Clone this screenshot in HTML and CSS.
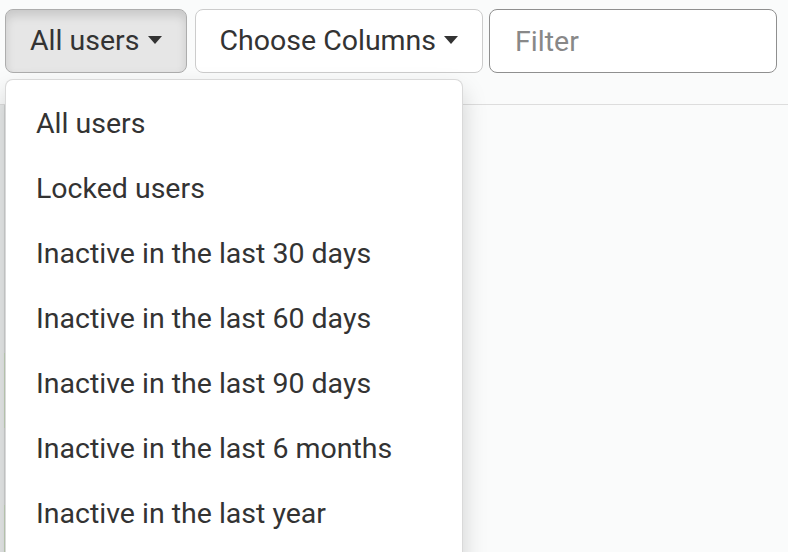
FILE: index.html
```html
<!DOCTYPE html>
<html lang="en">
<head>
    <meta charset="UTF-8">
    <meta name="viewport" content="width=device-width, initial-scale=1.0">
    <title>Users</title>
    <link rel="stylesheet" href="styles.css">
</head>
<body>
    <!-- Toolbar -->
    <div class="toolbar">
        <div class="btn-group">
            <button class="btn active">All users <span class="caret"></span></button>
            <ul class="dropdown-menu">
                <li><a href="#">All users</a></li>
                <li><a href="#">Locked users</a></li>
                <li><a href="#">Inactive in the last 30 days</a></li>
                <li><a href="#">Inactive in the last 60 days</a></li>
                <li><a href="#">Inactive in the last 90 days</a></li>
                <li><a href="#">Inactive in the last 6 months</a></li>
                <li><a href="#">Inactive in the last year</a></li>
            </ul>
        </div>
        <div class="btn-group">
            <button class="btn">Choose Columns <span class="caret"></span></button>
        </div>
        <input type="text" class="filter" placeholder="Filter">
    </div>

    <!-- Table -->
    <div class="content">
        <div class="row-strip">
            <div class="cell tall"></div>
            <div class="cell success"></div>
            <div class="cell"></div>
            <div class="cell success"></div>
        </div>
    </div>
</body>
</html>
```

FILE: styles.css
```css
* {
    margin: 0;
    padding: 0;
    box-sizing: border-box;
}

body, html {
    height: 100%;
    overflow: hidden;
}

body {
    background-color: #fafbfb;
    font-family: Roboto, 'Liberation Sans', sans-serif;
    font-size: 28.5px;
    line-height: 40px;
    color: #333;
}

.toolbar {
    display: flex;
    gap: 8px;
    padding: 9px 0 0 5px;
}

.btn-group {
    position: relative;
}

.btn {
    display: block;
    height: 64px;
    padding: 11px 24px;
    font-family: inherit;
    font-size: 28.5px;
    line-height: 40px;
    color: #333;
    background-color: #fff;
    border: 1px solid #ccc;
    border-radius: 8px;
    white-space: nowrap;
    cursor: pointer;
}

.btn.active {
    background-color: #e6e6e6;
    border-color: #adadad;
    box-shadow: inset 0 6px 10px rgba(0, 0, 0, 0.125);
}

.caret {
    display: inline-block;
    width: 0;
    height: 0;
    margin-left: 1px;
    vertical-align: middle;
    border-top: 8px solid #333;
    border-left: 7px solid transparent;
    border-right: 7px solid transparent;
    position: relative;
    top: -2px;
}

.filter {
    width: 288px;
    height: 64px;
    margin-left: -2px;
    padding: 11px 25px;
    font-family: inherit;
    font-size: 28.5px;
    color: #555;
    background-color: #fff;
    border: 1px solid #8f8f8f;
    border-radius: 8px;
    outline: none;
}

.filter::placeholder {
    color: #888;
}

/* Dropdown */
.dropdown-menu {
    position: absolute;
    top: 100%;
    left: 0;
    z-index: 1000;
    width: 458px;
    margin-top: 6px;
    padding: 11px 0 30px;
    list-style: none;
    background-color: #fff;
    border: 1px solid rgba(0, 0, 0, 0.15);
    border-radius: 8px;
    box-shadow: 0 12px 24px rgba(0, 0, 0, 0.175);
}

.dropdown-menu a {
    display: block;
    padding: 13px 30px 12px;
    color: #333;
    text-decoration: none;
    white-space: nowrap;
}

/* Table */
.content {
    margin-top: 31px;
    border-top: 1px solid #ddd;
    height: 100%;
}

.row-strip {
    width: 5px;
    background-color: #e8eaea;
    border-right: 1px solid #d0d2d2;
}

.cell {
    height: 77px;
}

.cell.tall {
    height: 248px;
}

.cell.success {
    height: 75px;
    border-right: 1px solid #c2d2ba;
    margin-right: -1px;
}

.cell.success:last-child {
    height: 200px;
}
```
